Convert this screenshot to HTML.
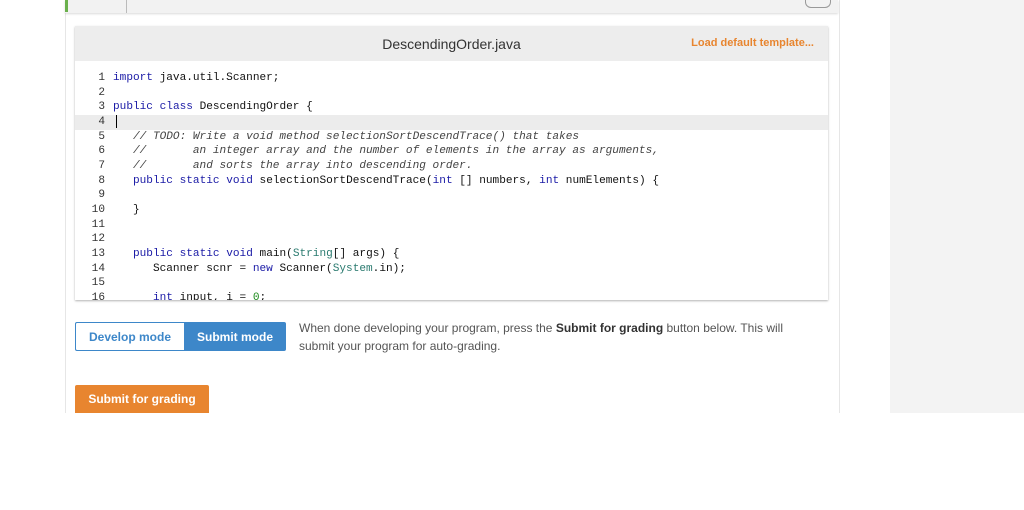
<!DOCTYPE html>
<html><head><style>
body{margin:0;width:1024px;height:510px;background:#fff;position:relative;overflow:hidden;font-family:"Liberation Sans",sans-serif}
.grayr{position:absolute;left:890px;top:0;width:134px;height:413px;background:#f3f3f3}
.top{position:absolute;left:65px;top:0;width:773px;height:13px;background:#f2f2f2;box-shadow:0 1px 2px rgba(0,0,0,.15)}
.card{position:absolute;left:65px;top:0;width:773px;height:413px;background:#fff;border-left:1px solid #e6e6e6;border-right:1px solid #e6e6e6}
.ed{position:absolute;left:75px;top:26px;width:753px;height:274px;background:#fff;box-shadow:0 1px 2px rgba(0,0,0,.3);overflow:hidden}
.hd{height:35px;background:#ededed;position:relative}
.hd .t{position:absolute;left:0;width:753px;text-align:center;top:10px;font-size:14px;color:#333}
.hd .l{position:absolute;right:14px;top:11px;font-size:11px;font-weight:bold;color:#e8852f}
.code{position:absolute;top:45px;left:0;width:753px;font-family:"Liberation Mono",monospace;font-size:11.1px;line-height:14.67px;color:#111}
.ln{display:block;height:14.67px;white-space:pre}
.n{display:inline-block;width:30px;text-align:right;color:#333;margin-right:8px}
.kw{color:#1a1aa6}.cm{color:#444;font-style:italic}.ty{color:#2a7a6f}.nu{color:#1a8a1a}
.hl{background:#ececec}
.btn{position:absolute;font-size:12px;font-weight:bold;display:flex;align-items:center;justify-content:center;box-sizing:border-box}
</style></head><body>
<div class="grayr"></div>
<div class="card"></div>
<div class="top"></div>
<div style="position:absolute;left:65px;top:0;width:3px;height:12px;background:#6ab04c"></div>
<div style="position:absolute;left:126px;top:0;width:1px;height:13px;background:#bbb"></div>
<div style="position:absolute;left:805px;top:0;width:24px;height:7px;border:1px solid #999;border-top:none;border-radius:0 0 6px 6px"></div>
<div class="ed">
<div class="hd"><div class="t">DescendingOrder.java</div><div class="l">Load default template...</div></div>
<div class="code">
<div class="ln"><span class="n">1</span><span class="kw">import</span> java.util.Scanner;</div>
<div class="ln"><span class="n">2</span></div>
<div class="ln"><span class="n">3</span><span class="kw">public</span> <span class="kw">class</span> DescendingOrder {</div>
<div class="ln hl"><span class="n">4</span><span style="display:inline-block;vertical-align:top;border-left:1px solid #000;height:13px;margin-left:3px"></span></div>
<div class="ln"><span class="n">5</span><span class="cm">   // TODO: Write a void method selectionSortDescendTrace() that takes</span></div>
<div class="ln"><span class="n">6</span><span class="cm">   //       an integer array and the number of elements in the array as arguments,</span></div>
<div class="ln"><span class="n">7</span><span class="cm">   //       and sorts the array into descending order.</span></div>
<div class="ln"><span class="n">8</span>   <span class="kw">public</span> <span class="kw">static</span> <span class="kw">void</span> selectionSortDescendTrace(<span class="kw">int</span> [] numbers, <span class="kw">int</span> numElements) {</div>
<div class="ln"><span class="n">9</span></div>
<div class="ln"><span class="n">10</span>   }</div>
<div class="ln"><span class="n">11</span></div>
<div class="ln"><span class="n">12</span></div>
<div class="ln"><span class="n">13</span>   <span class="kw">public</span> <span class="kw">static</span> <span class="kw">void</span> main(<span class="ty">String</span>[] args) {</div>
<div class="ln"><span class="n">14</span>      Scanner scnr = <span class="kw">new</span> Scanner(<span class="ty">System</span>.in);</div>
<div class="ln"><span class="n">15</span></div>
<div class="ln"><span class="n">16</span>      <span class="kw">int</span> input, i = <span class="nu">0</span>;</div>
</div>
</div>
<div class="btn" style="left:75px;top:322px;width:109px;height:29px;border:1px solid #3d87c9;border-right:none;border-radius:2px 0 0 2px;color:#3d87c9;background:#fff">Develop mode</div>
<div class="btn" style="left:184px;top:322px;width:102px;height:29px;background:#3d87c9;color:#fff;border-radius:0 2px 2px 0">Submit mode</div>
<div style="position:absolute;left:299px;top:319px;width:520px;font-size:12px;line-height:18px;color:#555">When done developing your program, press the <b style="color:#333">Submit for grading</b> button below. This will submit your program for auto-grading.</div>
<div class="btn" style="left:75px;top:385px;width:134px;height:28px;background:#e8852f;color:#fff;border-radius:2px 2px 0 0">Submit for grading</div>
</body></html>
